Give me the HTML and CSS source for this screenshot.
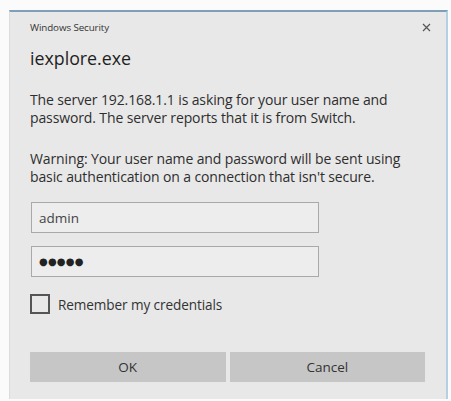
FILE: index.html
```html
<!DOCTYPE html>
<html>
<head>
<meta charset="utf-8">
<link rel="stylesheet" href="styles.css">
</head>
<body>
<div class="dialog">
  <div class="titlebar">
    <span class="title">Windows Security</span>
    <svg class="close" width="9" height="9" viewBox="0 0 9 9"><path d="M1 1L8 8M8 1L1 8" stroke="#555" stroke-width="1.2"/></svg>
  </div>
  <div class="app">iexplore.exe</div>
  <p class="msg first">The server 192.168.1.1 is asking for your user name and<br>password. The server reports that it is from Switch.</p>
  <p class="msg second">Warning: Your user name and password will be sent using<br>basic authentication on a connection that isn't secure.</p>
  <div class="field user">admin</div>
  <div class="field pw">●●●●●</div>
  <div class="remember"><span class="box"></span><span>Remember my credentials</span></div>
  <div class="buttons"><div class="btn">OK</div><div class="btn">Cancel</div></div>
</div>
</body>
</html>
```
FILE: styles.css
```css
html, body { margin: 0; padding: 0; }
body {
  background: #fbfbfb;
  width: 451px;
  height: 401px;
  overflow: hidden;
  font-family: "Open Sans", "Noto Sans", sans-serif;
  color: #2a2a2a;
}
.dialog {
  margin: 10px 0 0 9px;
  width: 439px;
  height: 389px;
  background: #e8e8e8;
  border-top: 2px solid #7d9fba;
  border-right: 2px solid #b5d0e2;
  border-left: 1px solid #dcdcdc;
  padding: 0 21px 0 20px;
  box-sizing: border-box;
  display: flex;
  flex-direction: column;
}
.titlebar {
  height: 30px;
  display: flex;
  align-items: center;
  justify-content: space-between;
}
.title { font-size: 9.8px; color: #333; letter-spacing: -0.1px; }
.close { margin-right: -6px; }
.app {
  margin-top: 4px;
  font-size: 17.8px;
  line-height: 24px;
  color: #1e1e1e;
}
.msg {
  margin: 0;
  font-size: 14px;
  line-height: 18px;
  color: #2e2e2e;
  letter-spacing: -0.12px;
}
.msg.first { margin-top: 21px; }
.msg.second { margin-top: 23px; }
.field {
  width: 288px;
  height: 31px;
  box-sizing: border-box;
  border: 1px solid #a9a9a9;
  background: #ededed;
  padding-left: 7px;
  display: flex;
  align-items: center;
  font-size: 13.5px;
  color: #444;
  margin-left: 1px;
}
.field.user { margin-top: 16px; }
.field.pw {
  margin-top: 13px;
  font-family: "DejaVu Sans", sans-serif;
  font-size: 10px;
  letter-spacing: 0.2px;
  color: #222;
}
.remember {
  margin-top: 17px;
  height: 20px;
  display: flex;
  align-items: center;
  gap: 8px;
  font-size: 13.6px;
  color: #333;
  letter-spacing: -0.1px;
}
.box {
  width: 16px;
  height: 16px;
  border: 2px solid #555;
}
.buttons {
  margin-top: 38px;
  display: flex;
  gap: 4px;
}
.btn {
  flex: 1;
  height: 30px;
  background: #c6c6c6;
  display: flex;
  align-items: center;
  justify-content: center;
  font-size: 13.5px;
  color: #333;
}
```
